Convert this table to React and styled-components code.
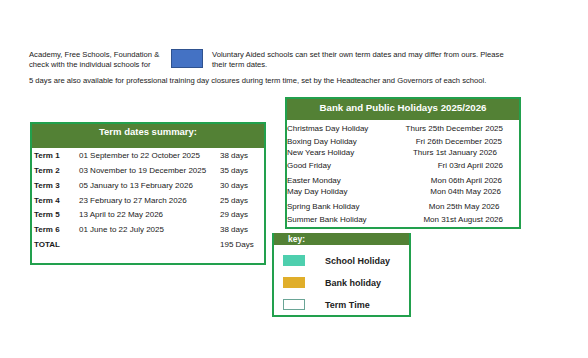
import React from "react";
import styled, { createGlobalStyle } from "styled-components";

const Global = createGlobalStyle`
  html, body { margin: 0; padding: 0; background: #ffffff; }
  body { font-family: "Liberation Sans", Arial, sans-serif; color: #1a1a1a; }
`;

const GREEN_BORDER = "#22a04d";
const HEADER_GREEN = "#538135";

const Page = styled.div`
  width: 588px;
  height: 358px;
  overflow: hidden;
  padding-top: 50px;
  box-sizing: border-box;
`;

const Notice = styled.div`
  padding-left: 29px;
  font-size: 7.65px;
  line-height: 9.5px;
`;

const NoticeRow = styled.div`
  display: flex;
  align-items: flex-start;
`;

const NoticeText = styled.div`
  width: ${(p) => p.$w}px;
  white-space: nowrap;
`;

const BlueBox = styled.div`
  width: 30px;
  height: 17px;
  margin-top: -1px;
  margin-right: 9px;
  background: #4472c4;
  border: 1px solid #2f528f;
`;

const NoticeLine = styled.div`
  margin-top: 7px;
  white-space: nowrap;
`;

const Main = styled.div`
  display: flex;
  align-items: flex-start;
  margin-top: 11px;
  padding-left: 30px;
`;

const TermBox = styled.div`
  width: 236px;
  height: 143px;
  box-sizing: border-box;
  margin-top: 25px;
  border: 2px solid ${GREEN_BORDER};
`;

const Header = styled.div`
  background: ${HEADER_GREEN};
  color: #ffffff;
  font-weight: bold;
  box-sizing: border-box;
  height: ${(p) => p.$h}px;
  font-size: ${(p) => p.$fs}px;
  line-height: ${(p) => p.$lh}px;
  padding-top: ${(p) => p.$pt || 0}px;
  padding-left: ${(p) => p.$pl || 0}px;
  text-align: ${(p) => (p.$left ? "left" : "center")};
`;

const TermRow = styled.div`
  display: grid;
  grid-template-columns: 45px 141px auto;
  box-sizing: border-box;
  height: 14.8px;
  align-items: center;
  padding-left: 2px;
  padding-top: 1.5px;
  font-size: 8px;
  white-space: nowrap;
`;

const Bold = styled.span`
  font-weight: bold;
`;

const RightCol = styled.div`
  display: flex;
  flex-direction: column;
  align-items: flex-start;
  margin-left: 6px;
`;

const HolidayBox = styled.div`
  width: 236px;
  height: 132px;
  box-sizing: border-box;
  margin-left: 13px;
  border: 2px solid ${GREEN_BORDER};
`;

const HolidayRow = styled.div`
  display: flex;
  justify-content: space-between;
  font-size: 8px;
  line-height: 10px;
  height: 10px;
  margin-top: ${(p) => p.$mt}px;
  padding-right: ${(p) => 16 + p.$inset}px;
  white-space: nowrap;
`;

const KeyBox = styled.div`
  width: 139px;
  height: 84px;
  box-sizing: border-box;
  margin-top: 4px;
  border: 2px solid ${GREEN_BORDER};
  border-top: none;
`;

const KeyList = styled.div`
  display: flex;
  flex-direction: column;
  gap: 11px;
  padding: 10.5px 0 0 9px;
`;

const KeyRow = styled.div`
  display: flex;
  align-items: center;
  gap: 20px;
  height: 11px;
  font-size: 9px;
  font-weight: bold;
  color: #222;
`;

const Swatch = styled.div`
  width: 22px;
  height: 11px;
  box-sizing: border-box;
  background: ${(p) => p.$bg};
  border: 1px solid ${(p) => p.$bd || p.$bg};
`;

const terms = [
  ["Term 1", "01 September to 22 October 2025", "38 days"],
  ["Term 2", "03 November to 19 December 2025", "35 days"],
  ["Term 3", "05 January to 13 February 2026", "30 days"],
  ["Term 4", "23 February to 27 March 2026", "25 days"],
  ["Term 5", "13 April to 22 May 2026", "29 days"],
  ["Term 6", "01 June to 22 July 2025", "38 days"],
  ["TOTAL", "", "195 Days"],
];

const holidays = [
  ["Christmas Day Holiday", "Thurs 25th December 2025", 4, 0],
  ["Boxing Day Holiday", "Fri 26th December 2025", 3, 1],
  ["New Years Holiday", "Thurs 1st January 2026", 1, 6],
  ["Good Friday", "Fri 03rd April 2026", 3, 0],
  ["Easter Monday", "Mon 06th April 2026", 5, 1],
  ["May Day Holiday", "Mon 04th May 2026", 1.5, 2],
  ["Spring Bank Holiday", "Mon 25th May 2026", 4.5, 3.5],
  ["Summer Bank Holiday", "Mon 31st August 2026", 3, 0],
];

const keys = [
  ["School Holiday", "#4ecfae"],
  ["Bank holiday", "#e0ae2a"],
  ["Term Time", "#ffffff", "#6aa596"],
];

export default function App() {
  return (
    <Page>
      <Global />
      <Notice>
        <NoticeRow>
          <NoticeText $w={142}>
            Academy, Free Schools, Foundation &amp;
            <br />
            check with the individual schools for
          </NoticeText>
          <BlueBox />
          <NoticeText $w={330}>
            Voluntary Aided schools can set their own term dates and may differ from ours. Please
            <br />
            their term dates.
          </NoticeText>
        </NoticeRow>
        <NoticeLine>
          5 days are also available for professional training day closures during term time, set by the Headteacher and Governors of each school.
        </NoticeLine>
      </Notice>
      <Main>
        <TermBox>
          <Header $h={24} $fs={9.5} $lh={12} $pt={2}>
            Term dates summary:
          </Header>
          {terms.map(([t, d, n]) => (
            <TermRow key={t}>
              <Bold>{t}</Bold>
              <span>{d}</span>
              <span>{n}</span>
            </TermRow>
          ))}
        </TermBox>
        <RightCol>
          <HolidayBox>
            <Header $h={21} $fs={9.7} $lh={18}>
              Bank and Public Holidays 2025/2026
            </Header>
            {holidays.map(([name, date, mt, inset]) => (
              <HolidayRow key={name} $mt={mt} $inset={inset}>
                <span>{name}</span>
                <span>{date}</span>
              </HolidayRow>
            ))}
          </HolidayBox>
          <KeyBox>
            <Header $h={12} $fs={8.5} $lh={12} $pl={14} $left>
              key:
            </Header>
            <KeyList>
              {keys.map(([label, bg, bd]) => (
                <KeyRow key={label}>
                  <Swatch $bg={bg} $bd={bd} />
                  <span>{label}</span>
                </KeyRow>
              ))}
            </KeyList>
          </KeyBox>
        </RightCol>
      </Main>
    </Page>
  );
}
